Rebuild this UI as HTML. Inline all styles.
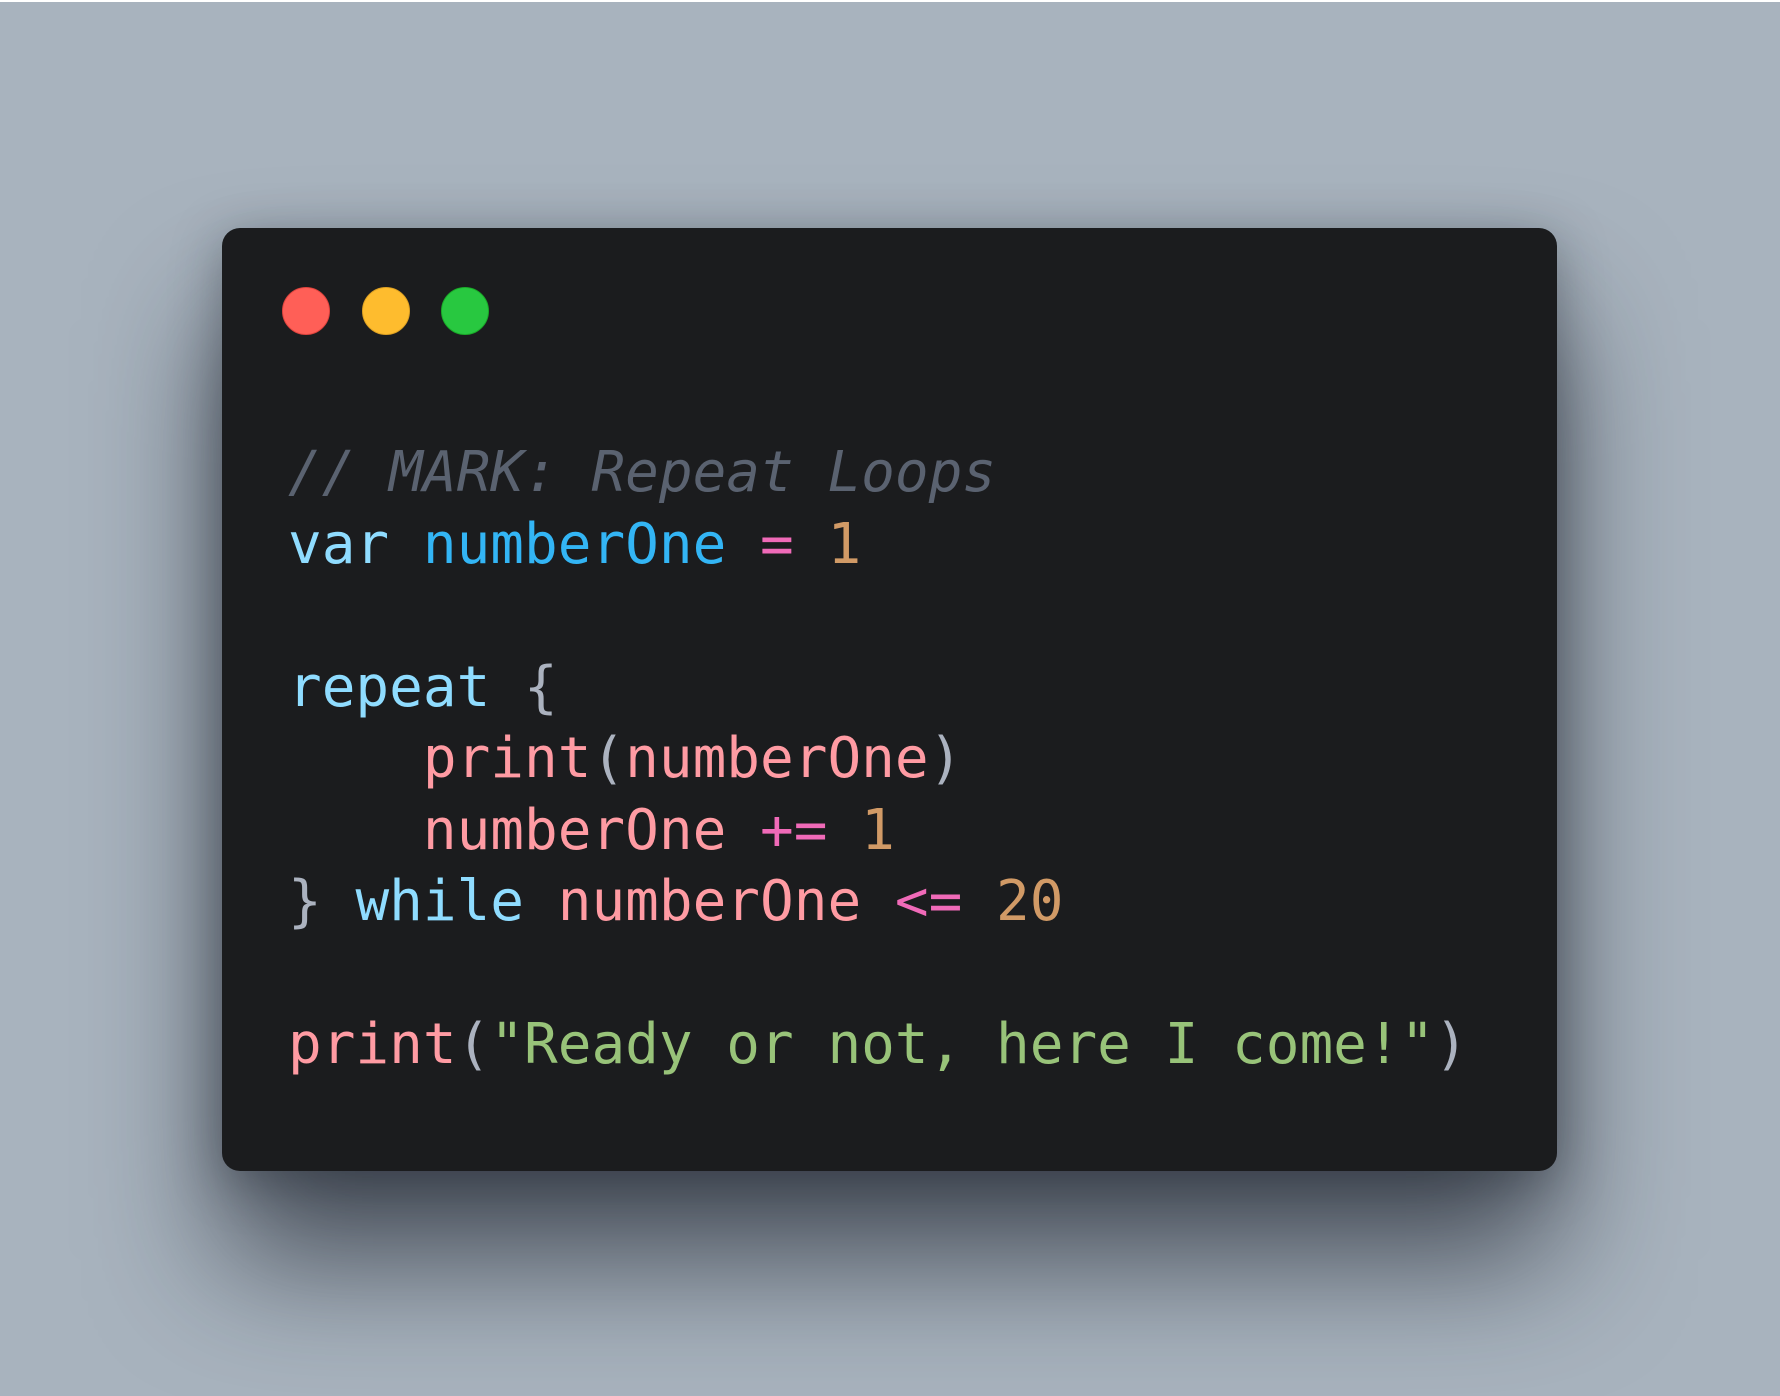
<!DOCTYPE html>
<html><head><meta charset="utf-8"><style>
html,body{margin:0;padding:0}
body{width:1780px;height:1396px;background:#a8b3be;position:relative;overflow:hidden;border-top:2px solid #fff;box-sizing:border-box}
.card{position:absolute;left:222px;top:226px;width:1335px;height:943px;background:#1b1c1e;border-radius:18px;box-shadow:0 90px 160px rgba(20,25,35,.65),0 10px 50px rgba(20,25,35,.35)}
.dot{position:absolute;top:285px;width:48px;height:48px;border-radius:50%;box-sizing:border-box}
pre{position:absolute;left:288px;top:435px;margin:0;font-family:"DejaVu Sans Mono","Liberation Mono",monospace;font-size:56px;line-height:71.5px;color:#abb2bf}
.c{color:#5a6270;font-style:italic}.k{color:#8fdcff}.v{color:#33b5f5}.o{color:#f06ab8}.n{color:#d19a66}.p{color:#ff9ba3}.s{color:#98c379}.g{color:#abb2bf}
</style></head><body>
<div class="card"></div>
<div class="dot" style="left:282px;background:#ff5f57;border:1.5px solid #e0443e"></div>
<div class="dot" style="left:362px;background:#febc2e;border:1.5px solid #dea123"></div>
<div class="dot" style="left:441px;background:#28c840;border:1.5px solid #1aab29"></div>
<pre><span class="c">// MARK: Repeat Loops</span>
<span class="k">var</span> <span class="v">numberOne</span> <span class="o">=</span> <span class="n">1</span>

<span class="k">repeat</span> <span class="g">{</span>
    <span class="p">print</span><span class="g">(</span><span class="p">numberOne</span><span class="g">)</span>
    <span class="p">numberOne</span> <span class="o">+=</span> <span class="n">1</span>
<span class="g">}</span> <span class="k">while</span> <span class="p">numberOne</span> <span class="o">&lt;=</span> <span class="n">20</span>

<span class="p">print</span><span class="g">(</span><span class="s">"Ready or not, here I come!"</span><span class="g">)</span></pre>
</body></html>
